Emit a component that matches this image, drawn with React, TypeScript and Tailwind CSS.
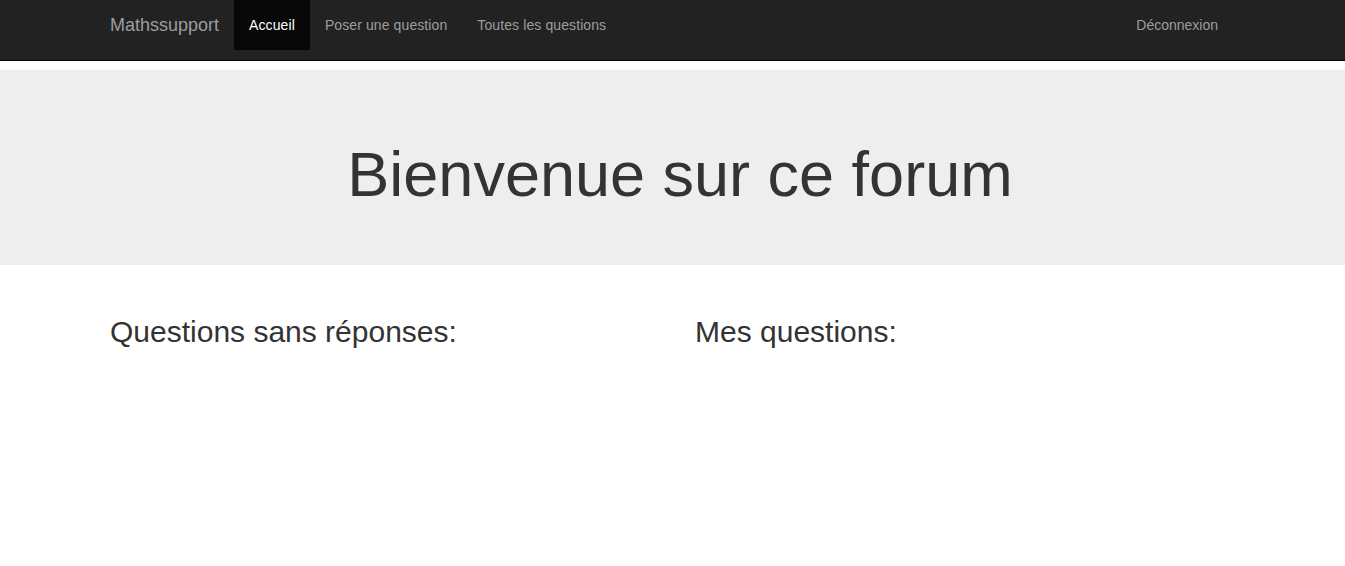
import React from 'react';

const links = [
  { label: 'Accueil', active: true },
  { label: 'Poser une question', active: false },
  { label: 'Toutes les questions', active: false },
];

export default function App() {
  return (
    <div className="min-h-[566px] bg-white font-['Liberation_Sans',Arial,sans-serif] text-[#333]">
      <nav className="h-[61px] bg-[#222] border-b border-[#080808]">
        <div className="flex items-start pl-[95px] pr-[112px]">
          <a className="h-[50px] px-[15px] flex items-center text-[18px] text-[#9d9d9d]">
            Mathssupport
          </a>
          <ul className="flex">
            {links.map((l) => (
              <li key={l.label}>
                <a
                  className={`h-[50px] px-[15px] flex items-center text-[14px] tracking-[0.1px] ${
                    l.active ? 'bg-[#080808] text-white' : 'text-[#9d9d9d]'
                  }`}
                >
                  {l.label}
                </a>
              </li>
            ))}
          </ul>
          <a className="ml-auto h-[50px] px-[15px] flex items-center text-[14px] text-[#9d9d9d]">
            Déconnexion
          </a>
        </div>
      </nav>

      <div className="mt-[9px] h-[195px] bg-[#eee] pt-[70px] pl-[15px]">
        <h1 className="text-center text-[63px] leading-[69px] text-[#333]">
          Bienvenue sur ce forum
        </h1>
      </div>

      <div className="mt-[50px] grid grid-cols-2 w-[1170px] ml-[110px]">
        <h2 className="text-[30px] leading-[33px]">Questions sans réponses:</h2>
        <h2 className="text-[30px] leading-[33px]">Mes questions:</h2>
      </div>
    </div>
  );
}
